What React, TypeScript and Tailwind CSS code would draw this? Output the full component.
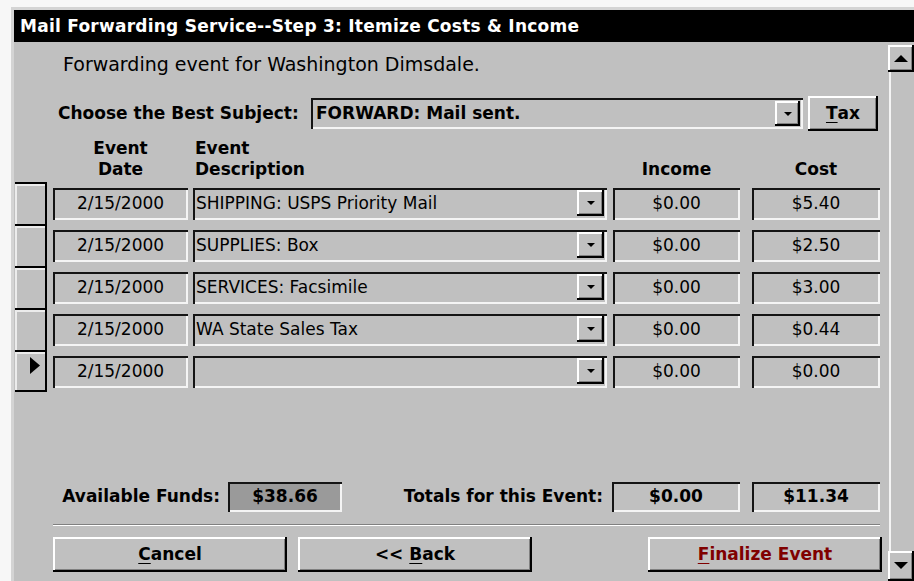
import React from "react";

// Classic 3D bevels for the form controls
const SUNKEN = "shadow-[inset_2px_2px_0_#141414,inset_-2px_-2px_0_#f4f4f4]";
const RAISED =
  "shadow-[inset_-2px_-2px_0_#000,inset_2px_2px_0_#fff,inset_-3px_-3px_0_#808080]";

type Item = { date: string; desc: string; income: string; cost: string };

const items: Item[] = [
  { date: "2/15/2000", desc: "SHIPPING: USPS Priority Mail", income: "$0.00", cost: "$5.40" },
  { date: "2/15/2000", desc: "SUPPLIES: Box", income: "$0.00", cost: "$2.50" },
  { date: "2/15/2000", desc: "SERVICES: Facsimile", income: "$0.00", cost: "$3.00" },
  { date: "2/15/2000", desc: "WA State Sales Tax", income: "$0.00", cost: "$0.44" },
  { date: "2/15/2000", desc: "", income: "$0.00", cost: "$0.00" },
];

function SmallDown() {
  return (
    <svg width="8" height="4" viewBox="0 0 8 4">
      <polygon points="0,0 8,0 4,4" fill="#000" />
    </svg>
  );
}

function DropButton({ size }: { size: string }) {
  return (
    <div
      className={`absolute right-[3px] top-[2px] ${size} ${RAISED} bg-[#c0c0c0] flex items-center justify-center`}
    >
      <SmallDown />
    </div>
  );
}

function Key({ children }: { children: React.ReactNode }) {
  return <span className="underline decoration-1 underline-offset-[3px]">{children}</span>;
}

function RowSelector({ current, last }: { current: boolean; last: boolean }) {
  return (
    <div
      className={`relative ml-[1px] w-[32px] h-[42px] shrink-0 border-t-2 border-r-2 border-black ${
        last ? "border-b-2" : ""
      } shadow-[inset_2px_2px_0_#ececec]`}
    >
      {current && (
        <svg className="absolute left-[15px] top-[5px]" width="10" height="17" viewBox="0 0 10 17">
          <polygon points="0,0 10,8.5 0,17" fill="#000" />
        </svg>
      )}
    </div>
  );
}

function LineRow({ item, current, last }: { item: Item; current: boolean; last: boolean }) {
  return (
    <div className="flex h-[42px]">
      <RowSelector current={current} last={last} />
      <div
        className={`ml-[6px] mt-[6px] w-[135px] h-[32px] ${SUNKEN} flex items-center justify-center`}
      >
        {item.date}
      </div>
      <div className={`relative ml-[5px] mt-[6px] w-[414px] h-[32px] ${SUNKEN} flex items-center pl-[3px]`}>
        <span className="whitespace-nowrap">{item.desc}</span>
        <DropButton size="w-[27px] h-[26px]" />
      </div>
      <div className={`ml-[6px] mt-[6px] w-[127px] h-[32px] ${SUNKEN} flex items-center justify-center`}>
        {item.income}
      </div>
      <div className={`ml-[12px] mt-[6px] w-[128px] h-[32px] ${SUNKEN} flex items-center justify-center`}>
        {item.cost}
      </div>
    </div>
  );
}

function Scrollbar() {
  return (
    <div className="w-[26px] shrink-0 flex flex-col pt-[3px]">
      <div className={`h-[27px] shrink-0 ${RAISED} bg-[#c0c0c0] flex items-center justify-center`}>
        <svg width="14" height="7" viewBox="0 0 14 7">
          <polygon points="0,7 14,7 7,0" fill="#000" />
        </svg>
      </div>
      <div className="flex-1 ml-[1px] border-l-2 border-[#f4f4f4] bg-[#c0c0c0]" />
      <div className={`h-[30px] shrink-0 ${RAISED} bg-[#c0c0c0] flex justify-center pt-[11px]`}>
        <svg width="14" height="7" viewBox="0 0 14 7">
          <polygon points="0,0 14,0 7,7" fill="#000" />
        </svg>
      </div>
    </div>
  );
}

export default function App() {
  return (
    <div className="w-[914px] h-[581px] overflow-hidden bg-[#f7f7f7] pl-[11px] pt-[7px] font-['DejaVu_Sans',sans-serif] text-[17px] text-black">
      <div className="h-full flex flex-col border-l-[3px] border-t-[3px] border-[#d4d4d4] bg-[#c0c0c0]">
        {/* window caption */}
        <div className="h-[32px] shrink-0 bg-black text-white font-bold text-[17px] tracking-[0.25px] leading-[32px] pl-[6px] whitespace-nowrap">
          Mail Forwarding Service--Step 3: Itemize Costs &amp; Income
        </div>

        <div className="flex flex-1 min-h-0">
          <div className="flex-1 flex flex-col">
            {/* heading */}
            <div className="pt-[10px] pl-[49px] text-[19px] leading-[24px] whitespace-nowrap">
              Forwarding event for Washington Dimsdale.
            </div>

            {/* subject chooser */}
            <div className="mt-[20px] h-[35px] flex items-center">
              <div className="w-[297px] pl-[44px] font-bold whitespace-nowrap">Choose the Best Subject:</div>
              <div className={`relative w-[492px] h-[31px] ${SUNKEN} flex items-center pl-[5px] font-bold`}>
                FORWARD: Mail sent.
                <div
                  className={`absolute right-[3px] top-[3px] w-[25px] h-[25px] ${RAISED} bg-[#c0c0c0] flex items-center justify-center`}
                >
                  <SmallDown />
                </div>
              </div>
              <div className={`ml-[5px] w-[70px] h-[35px] ${RAISED} flex items-center justify-center font-bold`}>
                <Key>T</Key>ax
              </div>
            </div>

            {/* column headings */}
            <div className="h-[51px] pt-[7px] flex font-bold leading-[21px]">
              <div className="ml-[39px] w-[135px] text-center">
                <div>Event</div>
                <div>Date</div>
              </div>
              <div className="ml-[5px] w-[414px] pl-[2px]">
                <div>Event</div>
                <div>Description</div>
              </div>
              <div className="ml-[6px] w-[127px] text-center pt-[21px]">Income</div>
              <div className="ml-[12px] w-[128px] text-center pt-[21px]">Cost</div>
            </div>

            {/* line items */}
            <div className="flex flex-col">
              {items.map((it, i) => (
                <LineRow key={i} item={it} current={i === items.length - 1} last={i === items.length - 1} />
              ))}
            </div>

            {/* totals */}
            <div className="mt-[90px] h-[30px] flex items-center font-bold">
              <div className="w-[214px] text-right pr-[8px] whitespace-nowrap">Available Funds:</div>
              <div className={`w-[114px] h-[30px] ${SUNKEN} bg-[#9a9a9a] flex items-center justify-center`}>
                $38.66
              </div>
              <div className="w-[270px] text-right pr-[9px] whitespace-nowrap">Totals for this Event:</div>
              <div className={`w-[128px] h-[30px] ${SUNKEN} flex items-center justify-center`}>$0.00</div>
              <div className={`ml-[12px] w-[128px] h-[30px] ${SUNKEN} flex items-center justify-center`}>
                $11.34
              </div>
            </div>

            {/* etched divider */}
            <div className="mt-[12px] ml-[39px] w-[827px] border-t border-b border-t-[#808080] border-b-white" />

            {/* actions */}
            <div className="mt-[11px] flex font-bold">
              <div className={`ml-[39px] w-[234px] h-[35px] ${RAISED} flex items-center justify-center`}>
                <Key>C</Key>ancel
              </div>
              <div className={`ml-[11px] w-[234px] h-[35px] ${RAISED} flex items-center justify-center`}>
                &lt;&lt;&nbsp;<Key>B</Key>ack
              </div>
              <div
                className={`ml-[116px] w-[234px] h-[35px] ${RAISED} flex items-center justify-center text-[#800000]`}
              >
                <Key>F</Key>inalize Event
              </div>
            </div>
          </div>

          <Scrollbar />
        </div>
      </div>
    </div>
  );
}
